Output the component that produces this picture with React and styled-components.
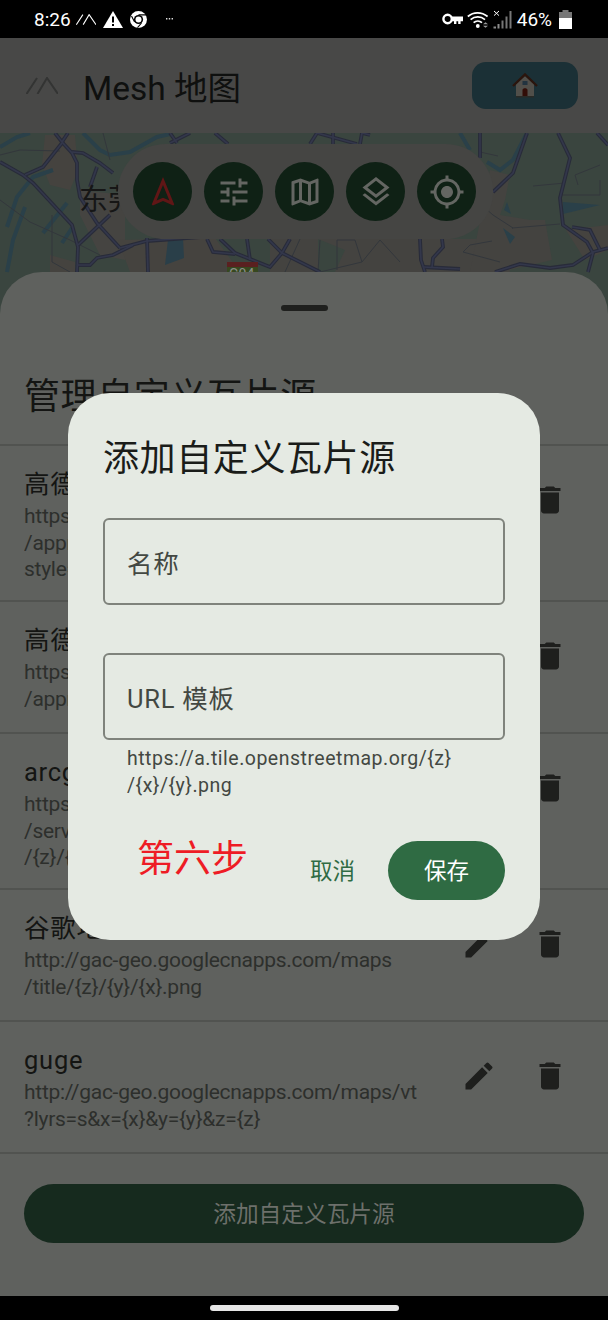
import styled, { createGlobalStyle } from "styled-components";
import {
  MdDelete,
  MdEdit,
  MdGpsFixed,
  MdOutlineLayers,
  MdOutlineMap,
  MdOutlineNavigation,
  MdTune,
} from "react-icons/md";

const GlobalStyle = createGlobalStyle`
  html, body {
    margin: 0;
    padding: 0;
    background: #000;
  }
  body {
    font-family: Roboto, "Noto Sans CJK SC", sans-serif;
  }
`;

const Page = styled.div`
  position: relative;
  width: 608px;
  height: 1320px;
  overflow: hidden;
  display: flex;
  flex-direction: column;
`;

const StatusBar = styled.div`
  height: 38px;
  flex: none;
  background: #000;
  color: #fff;
  display: flex;
  align-items: center;
  justify-content: space-between;
  padding: 0 36px 0 34px;
  font-size: 19px;
`;

const StatusGroup = styled.div`
  display: flex;
  align-items: center;
  gap: ${(p) => p.$gap || 0}px;
  margin-left: ${(p) => p.$left || 0}px;
`;

const BatteryText = styled.span`
  margin: 0 3px 0 1px;
`;

const AppBar = styled.div`
  height: 95px;
  flex: none;
  box-sizing: border-box;
  background: #484847;
  display: flex;
  align-items: center;
  padding: 0 30px 0 26px;
`;

const AppTitle = styled.div`
  flex: 1;
  margin-left: 25px;
  font-size: 33.5px;
  color: #0f100f;
  margin-top: -1px;
`;

const HomeButton = styled.div`
  width: 106px;
  height: 47px;
  margin-top: -1px;
  border-radius: 14px;
  background: #1b3036;
  display: flex;
  align-items: center;
  justify-content: center;
`;

const MapArea = styled.div`
  position: relative;
  height: 181px;
  flex: none;
  background: #3f4a44;
`;

const MapSvg = styled.svg`
  display: block;
`;

const ToolBar = styled.div`
  position: absolute;
  left: 118px;
  top: 11px;
  width: 375px;
  height: 95px;
  box-sizing: border-box;
  padding: 18px 15px;
  border-radius: 48px;
  background: #454543;
  display: flex;
  gap: 12px;
`;

const ToolButton = styled.div`
  width: 59px;
  height: 59px;
  border-radius: 50%;
  background: #0f2115;
  color: ${(p) => (p.$alert ? "#601616" : "#646662")};
  display: flex;
  align-items: center;
  justify-content: center;
`;

const Sheet = styled.div`
  position: relative;
  flex: 1;
  margin-top: -42px;
  border-radius: 42px 42px 0 0;
  background: #5f615e;
  display: flex;
  flex-direction: column;
`;

const Handle = styled.div`
  width: 47px;
  height: 6px;
  margin: 33px auto 0;
  border-radius: 3px;
  background: #1f201e;
`;

const SheetTitle = styled.div`
  margin: 59px 0 20px 24px;
  font-size: 36px;
  letter-spacing: 0.6px;
  line-height: 54px;
  color: #141513;
`;

const List = styled.div`
  border-top: 2px solid #515350;
`;

const Row = styled.div`
  height: ${(p) => p.$height}px;
  box-sizing: border-box;
  border-bottom: 2px solid #515350;
  padding: 0 28px 0 24px;
  display: flex;
  align-items: flex-start;
`;

const RowText = styled.div`
  flex: 1;
  padding-top: 22px;
  white-space: nowrap;
  overflow: hidden;
`;

const RowName = styled.div`
  font-size: 25.5px;
  letter-spacing: 0.75px;
  line-height: 32px;
  margin-bottom: 3px;
  color: #141513;
`;

const RowUrl = styled.div`
  font-size: 21px;
  line-height: 26.67px;
  letter-spacing: -0.28px;
  color: #2d2f2c;
`;

const RowActions = styled.div`
  display: flex;
  gap: 11px;
  margin-top: 24px;
  color: #1e1f1d;
`;

const IconButton = styled.div`
  width: 60px;
  height: 60px;
  display: flex;
  align-items: center;
  justify-content: center;
`;

const AddButton = styled.div`
  height: 59px;
  box-sizing: border-box;
  margin: 30px 24px 0;
  padding-bottom: 3px;
  border-radius: 30px;
  background: #162a1e;
  color: #6d706b;
  font-size: 22.7px;
  display: flex;
  align-items: center;
  justify-content: center;
`;

const NavBar = styled.div`
  height: 24px;
  flex: none;
  background: #000;
  display: flex;
  justify-content: center;
  padding-top: 9px;
  box-sizing: border-box;
`;

const NavPill = styled.div`
  width: 189px;
  height: 6px;
  border-radius: 3px;
  background: #e6e6e6;
`;

const Dialog = styled.div`
  position: absolute;
  left: 68px;
  top: 393px;
  width: 472px;
  height: 547px;
  box-sizing: border-box;
  padding: 39px 35px 0;
  border-radius: 42px;
  background: #e5eae3;
`;

const DialogTitle = styled.div`
  font-size: 36px;
  letter-spacing: 0.6px;
  line-height: 54px;
  color: #1a1c19;
`;

const Field = styled.div`
  height: 87px;
  box-sizing: border-box;
  margin-top: ${(p) => p.$top}px;
  padding: 0 22px;
  border: 2px solid #7f837c;
  border-radius: 6px;
  display: flex;
  align-items: center;
  font-size: 25.5px;
  letter-spacing: 0.75px;
  color: #434842;
`;

const Hint = styled.div`
  margin: 5px 0 0 24px;
  font-size: 19.5px;
  line-height: 27px;
  letter-spacing: 0.5px;
  color: #434842;
  white-space: nowrap;
`;

const DialogActions = styled.div`
  margin-top: 42px;
  display: flex;
  justify-content: flex-end;
  align-items: center;
  gap: 33px;
`;

const TextAction = styled.div`
  font-size: 22.5px;
  color: #2f6b43;
  margin-top: -3px;
`;

const SaveAction = styled.div`
  width: 117px;
  height: 59px;
  box-sizing: border-box;
  padding-bottom: 3px;
  border-radius: 30px;
  background: #2f6b43;
  color: #fff;
  font-size: 22.5px;
  display: flex;
  align-items: center;
  justify-content: center;
`;

const StepNote = styled.div`
  position: absolute;
  left: 69px;
  top: 443px;
  font-size: 37px;
  line-height: 48px;
  color: #ee1c25;
`;

const rows = [
  {
    name: "高德地图",
    height: 156,
    url: [
      "https://webrd02.is.autonavi.com",
      "/appmaptile?lang=zh_cn&size=1&scale=1&",
      "style=8&x={x}&y={y}&z={z}",
    ],
  },
  {
    name: "高德卫星",
    height: 132,
    url: ["https://webst02.is.autonavi.com", "/appmaptile?style=6&x={x}&y={y}&z={z}"],
  },
  {
    name: "arcgis",
    height: 156,
    url: [
      "https://server.arcgisonline.com/arcgis/rest",
      "/services/World_Imagery/MapServer/tile",
      "/{z}/{y}/{x}",
    ],
  },
  {
    name: "谷歌地图",
    height: 132,
    url: ["http://gac-geo.googlecnapps.com/maps", "/title/{z}/{y}/{x}.png"],
  },
  {
    name: "guge",
    height: 132,
    url: ["http://gac-geo.googlecnapps.com/maps/vt", "?lyrs=s&x={x}&y={y}&z={z}"],
  },
];

// all map paths use page coordinates, the viewBox starts at the top of the map
const roads = [
  "M55 133 L62 142 L72 153 L77 163 L77 180 L80 197 L97 223 L120 248",
  "M0 162 L23 175 L33 183 L72 225 L78 247 L77 272",
  "M62 142 L68 133",
  "M72 152 L83 153 L100 163 L113 173",
  "M25 175 L43 167 L62 143",
  "M120 248 L147 241 L200 237",
  "M77 265 L90 265 L97 258 L113 255 L133 245",
  "M147 238 L148 272",
  "M78 245 L110 215",
  "M97 167 L90 187",
  "M170 133 L177 143 M170 143 L190 133",
  "M215 133 L228 144",
  "M310 144 L317 133 L357 144",
  "M333 133 L333 144",
  "M360 144 L362 133 L370 135",
  "M207 239 L213 252 L235 254",
  "M220 239 L235 253 L270 267 L282 253 L290 239",
  "M247 239 L250 260",
  "M268 239 L282 253 L320 272",
  "M420 239 L421 260 L425 272",
  "M442 239 L443 247 L433 258 L432 267",
  "M423 267 L460 269",
  "M495 272 L520 264 L550 268 L573 265 L593 252 L608 248",
  "M597 133 L608 145",
  "M527 133 L513 173 L493 192",
  "M480 133 L480 158",
  "M558 133 L570 158 L560 198 L563 225 L587 242 L593 253 L588 272",
  "M572 227 L590 230 L600 250",
];

const water = [
  "M83 133 L100 150 L110 155 L130 152 L157 137 L170 134",
  "M0 147 L17 137 L30 133",
  "M53 170 L33 177 L17 197 L7 227",
  "M25 207 L13 240 L7 272",
  "M43 233 L67 203",
  "M62 243 L72 228",
  "M460 133 L470 150",
  "M487 162 L500 170 L513 160 L527 133",
];

const thinRoads = [
  "M0 155 L20 150 L60 151",
  "M0 200 L30 222 L70 240 L100 255",
  "M52 215 L52 262 L70 272",
  "M103 133 L110 160",
  "M300 239 L285 272",
  "M320 240 L318 272",
  "M337 240 L337 270 M337 240 L355 240 L362 262 L320 272",
  "M362 262 L380 240 M380 240 L400 262",
  "M470 195 L493 215 L513 228 L512 228 L560 224",
  "M463 252 L470 245 L492 241 M463 252 L500 262",
  "M600 165 L575 175 L578 185 M560 195 L600 195 L600 180",
  "M533 186 L565 183",
  "M480 152 L498 156",
];

const CityMap = () => (
  <MapSvg width="608" height="181" viewBox="0 133 608 181">
    <rect x="0" y="133" width="608" height="181" fill="#3a453f" />
    <path d="M45 135 L75 135 L78 170 L70 190 L50 185 L42 165 Z" fill="#45433f" />
    <path d="M80 190 L125 195 L125 260 L100 255 L80 215 Z" fill="#454441" />
    <path d="M118 240 L215 238 L240 272 L130 272 Z" fill="#45433f" />
    <path d="M270 239 L500 239 L510 272 L270 272 Z" fill="#444340" />
    <path d="M490 170 L510 175 L505 200 L500 215 L530 220 L545 220 L552 260 L500 272 L470 272 Z" fill="#444340" />
    <path d="M50 255 L75 262 L75 272 L50 272 Z" fill="#45433f" />
    <path d="M318 239 L345 250 L335 272 L318 272 Z" fill="#3a453f" />
    <path d="M566 230 L608 225 L608 250 L585 260 Z" fill="#45433f" />
    <path d="M168 240 L183 238 L184 258 L165 265 Z" fill="#2a3f49" />
    {water.map((d) => (
      <path key={d} d={d} fill="none" stroke="#2a4049" strokeWidth="4" />
    ))}
    <path d="M563 202 L600 205 L563 214 Z" fill="#2a4049" />
    <path d="M507 202 L511 214 L504 210 Z" fill="#2a4049" />
    <path d="M503 228 L515 237 L510 244 Z" fill="#2a4049" />
    {thinRoads.map((d) => (
      <path key={d} d={d} fill="none" stroke="#33373c" strokeWidth="1" />
    ))}
    {roads.map((d) => (
      <path key={d} d={d} fill="none" stroke="#282b39" strokeWidth="3.8" />
    ))}
    {roads.map((d) => (
      <path key={d} d={d} fill="none" stroke="#33374b" strokeWidth="1.7" />
    ))}
    <text x="79" y="210" fontSize="29" fill="#161616" fontFamily="Noto Sans CJK SC, sans-serif">
      东莞
    </text>
    <rect x="227" y="262" width="31" height="52" fill="#37481f" />
    <rect x="227" y="262" width="31" height="5" fill="#5a2020" />
    <text x="229" y="279" fontSize="14" fill="#8a8f88" fontFamily="Roboto, sans-serif">
      G04
    </text>
  </MapSvg>
);

const MeshMark = ({ size, color, weight }) => (
  <svg width={size} height={size * 0.55} viewBox="0 0 32 17.6">
    <path
      d="M0.5 17 L11 1 M11.5 17 L21 1 L32 17"
      fill="none"
      stroke={color}
      strokeWidth={weight}
    />
  </svg>
);

const WarningIcon = () => (
  <svg width="20" height="17" viewBox="0 0 20 17">
    <path d="M10 0 L20 17 L0 17 Z" fill="#fff" />
    <rect x="9" y="5.5" width="2" height="6" fill="#000" />
    <rect x="9" y="13" width="2" height="2" fill="#000" />
  </svg>
);

const ChromeIcon = () => (
  <svg width="17" height="17" viewBox="0 0 17 17">
    <circle cx="8.5" cy="8.5" r="8.5" fill="#fff" />
    <circle cx="8.5" cy="8.5" r="4.6" fill="#000" />
    <circle cx="8.5" cy="8.5" r="3" fill="#fff" />
    <path d="M8.5 3.9 L16 3.9 M4.6 11 L1.5 5 M11.5 12 L7.5 16.6" stroke="#000" strokeWidth="1.1" />
  </svg>
);

const MoreDots = () => (
  <svg width="7" height="2" viewBox="0 0 7 2">
    <path d="M0 0h1.4v1.4H0zM2.8 0h1.4v1.4H2.8zM5.6 0H7v1.4H5.6z" fill="#ddd" />
  </svg>
);

const KeyIcon = () => (
  <svg width="21" height="12" viewBox="0 0 21 12">
    <circle cx="5.6" cy="6" r="4.2" fill="none" stroke="#fff" strokeWidth="2.4" />
    <path d="M9 3.6 H21 V8.2 H18.6 V11 H16.2 V8.2 H14.4 V11 H12 V8.2 H9 Z" fill="#fff" />
  </svg>
);

const WifiIcon = () => (
  <svg width="22" height="17" viewBox="0 0 22 17">
    <path
      d="M0.8 5.5 C6.5 0.6 14.5 0.6 20.6 5.5 M3.6 8.6 C7.8 5 13.8 5 18 8.6 M6.6 11.6 C9 9.6 12.6 9.6 15 11.6"
      fill="none"
      stroke="#fff"
      strokeWidth="1.7"
    />
    <circle cx="10.8" cy="15" r="1.9" fill="#fff" />
    <path d="M16 13.3 h5 l-2.5 -2 z M16 14.7 h5 l-2.5 2 z" fill="#9a9a9a" />
  </svg>
);

const SignalIcon = () => (
  <svg width="19" height="19" viewBox="0 0 19 19">
    <path d="M0.5 16.5 H3 V18.5 H0.5 Z" fill="#8a8a8a" />
    <path d="M4.5 14 H6.5 V18.5 H4.5 Z" fill="#8a8a8a" />
    <path d="M8.5 10.5 H10.5 V18.5 H8.5 Z" fill="#777" />
    <path d="M12.5 6.5 H14.5 V18.5 H12.5 Z" fill="#777" />
    <path d="M16.5 1 H18.5 V18.5 H16.5 Z" fill="#777" />
    <path d="M1 1 L6 5.6 M6 1 L1 5.6" stroke="#fff" strokeWidth="1" />
  </svg>
);

const BatteryIcon = () => (
  <svg width="13" height="19" viewBox="0 0 13 19">
    <rect x="3.5" y="0" width="6" height="2" fill="#777" />
    <rect x="0" y="2" width="13" height="6" fill="#777" />
    <rect x="0" y="8" width="13" height="11" fill="#fff" />
  </svg>
);

const HouseEmoji = () => (
  <svg width="26" height="25" viewBox="0 0 26 25">
    <path d="M4 11 L13 3 L22 11 V24 H4 Z" fill="#514f4a" />
    <path d="M1 13 L13 1.5 L25 13" fill="none" stroke="#2b150d" strokeWidth="2.4" />
    <rect x="10.5" y="8" width="5" height="4" fill="#22333f" />
    <path d="M10.5 24 V17 C10.5 14.5 15.5 14.5 15.5 17 V24 Z" fill="#320d07" />
    <rect x="4" y="23" width="18" height="1.5" fill="#2a2a26" />
  </svg>
);

const App = () => {
  return (
    <Page>
      <GlobalStyle />
      <StatusBar>
        <StatusGroup>
          <span>8:26</span>
          <StatusGroup $gap={7} $left={5}>
            <MeshMark size={20} color="#fff" weight={1.7} />
            <WarningIcon />
            <ChromeIcon />
          </StatusGroup>
          <StatusGroup $left={19}>
            <MoreDots />
          </StatusGroup>
        </StatusGroup>
        <StatusGroup $gap={4}>
          <KeyIcon />
          <WifiIcon />
          <SignalIcon />
          <BatteryText>46%</BatteryText>
          <BatteryIcon />
        </StatusGroup>
      </StatusBar>

      <AppBar>
        <MeshMark size={32} color="#333433" weight={2} />
        <AppTitle>Mesh 地图</AppTitle>
        <HomeButton>
          <HouseEmoji />
        </HomeButton>
      </AppBar>

      <MapArea>
        <CityMap />
        <ToolBar>
          <ToolButton $alert>
            <MdOutlineNavigation size={36} />
          </ToolButton>
          <ToolButton>
            <MdTune size={36} />
          </ToolButton>
          <ToolButton>
            <MdOutlineMap size={36} />
          </ToolButton>
          <ToolButton>
            <MdOutlineLayers size={36} />
          </ToolButton>
          <ToolButton>
            <MdGpsFixed size={36} />
          </ToolButton>
        </ToolBar>
      </MapArea>

      <Sheet>
        <Handle />
        <SheetTitle>管理自定义瓦片源</SheetTitle>
        <List>
          {rows.map((row) => (
            <Row key={row.name} $height={row.height}>
              <RowText>
                <RowName>{row.name}</RowName>
                {row.url.map((line) => (
                  <RowUrl key={line}>{line}</RowUrl>
                ))}
              </RowText>
              <RowActions>
                <IconButton>
                  <MdEdit size={36} />
                </IconButton>
                <IconButton>
                  <MdDelete size={36} />
                </IconButton>
              </RowActions>
            </Row>
          ))}
        </List>
        <AddButton>添加自定义瓦片源</AddButton>
      </Sheet>

      <NavBar>
        <NavPill />
      </NavBar>

      <Dialog>
        <DialogTitle>添加自定义瓦片源</DialogTitle>
        <Field $top={32}>名称</Field>
        <Field $top={48}>URL 模板</Field>
        <Hint>
          https://a.tile.openstreetmap.org/{"{z}"}
          <br />/{"{x}"}/{"{y}"}.png
        </Hint>
        <DialogActions>
          <TextAction>取消</TextAction>
          <SaveAction>保存</SaveAction>
        </DialogActions>
        <StepNote>第六步</StepNote>
      </Dialog>
    </Page>
  );
};

export default App;
